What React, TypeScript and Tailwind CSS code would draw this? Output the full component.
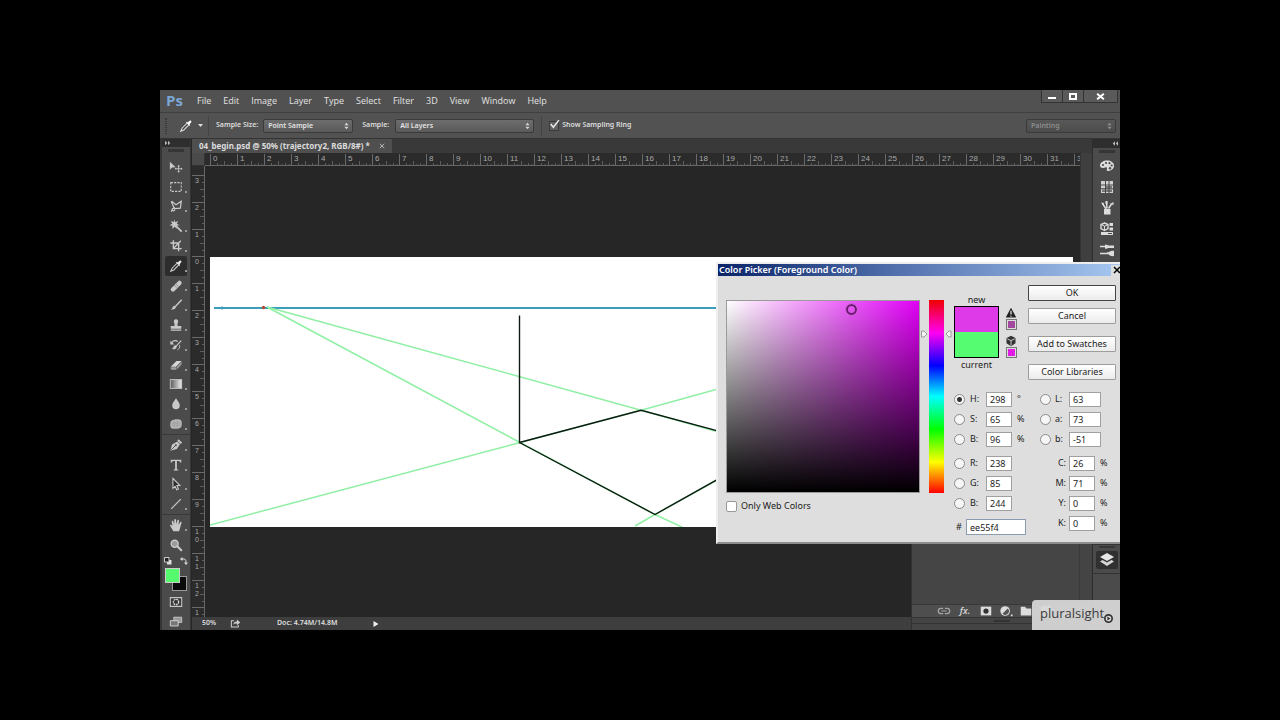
import type { ReactNode } from 'react'

const dot = '#c9c9c9'

type Tool = { name: string; icon: ReactNode; active?: boolean; noFlyout?: boolean }

const paintTools: Tool[] = [
    {
        name: 'Move',
        noFlyout: true,
        icon: (
            <>
                <path d="M1 2v9l2.500-2.300 4.200-.5z" fill={dot} />
                <path d="M11 6.500v7M7.500 10h7" stroke={dot} strokeWidth="1" />
                <path d="M11 5.500l1.500 1.800h-3zM11 14.500l1.500-1.800h-3zM6.500 10l1.800-1.500v3zM15.500 10l-1.800-1.500v3z" fill={dot} />
            </>
        ),
    },
    { name: 'Marquee', icon: <rect x="2" y="3" width="12" height="10" fill="none" stroke={dot} strokeDasharray="2.500 1.300" strokeWidth="1.200" /> },
    {
        name: 'Lasso',
        icon: <path d="M3 2.500l5 4L14 2.500l-1 8-6.500.5L5 8.500 2.500 2.500M6.500 11C4 10 3 11.500 4 13c1 1 2.500.5 2.500-1M3.500 12.500l-1 2" fill="none" stroke={dot} strokeWidth="1.400" />,
    },
    {
        name: 'Magic Wand',
        icon: (
            <>
                <path d="M6 .5l1.200 3.300 3.300-1.600L9 5.300 12 7.200l-3.400.5.5 3.500L6.500 8.800 3.800 11.500l.2-3.700L.5 7l3.200-1.700L2 2l3.300 1.800z" fill={dot} />
                <path d="M8 8l6.500 6.500" stroke={dot} strokeWidth="2" />
            </>
        ),
    },
    { name: 'Crop', icon: <path d="M5 1.500V11h9.500M1.500 4.500H11V14M5 11l8.500-9" fill="none" stroke={dot} strokeWidth="1.600" /> },
    {
        name: 'Eyedropper',
        active: true,
        icon: (
            <>
                <path d="M9 5L3.500 10.500 2 14l3.500-1.500L11 7" fill="#333" stroke={dot} strokeWidth="1.200" />
                <path d="M8 4l4 4 .8-1-.8-1 2-2.200c.8-1-.8-2.600-1.800-1.800L10 4 9 3z" fill="#ededed" />
            </>
        ),
    },
    {
        name: 'Healing Brush',
        icon: (
            <>
                <path d="M4.500 12L12 4.500" stroke={dot} strokeWidth="5" strokeLinecap="round" />
                <path d="M6 7l3 3M7.800 5.500l3 3" stroke="#777" strokeWidth=".8" />
            </>
        ),
    },
    {
        name: 'Brush',
        icon: (
            <>
                <path d="M14.500 2L7.500 9.500" stroke={dot} strokeWidth="1.700" />
                <path d="M8 9.500C6 8 4.500 9 4 11c-.5 1.500-1.500 1.800-2.500 1.800 3 1.200 6.500.2 6.500-3.300z" fill={dot} />
            </>
        ),
    },
    {
        name: 'Clone Stamp',
        icon: <path d="M6.300 6.500C4.500 4 6 1.500 8 1.500s3.500 2.500 1.700 5V9H14v3.300H2V9h4.300zM2 13.200h12v1.300H2z" fill={dot} />,
    },
    {
        name: 'History Brush',
        icon: (
            <>
                <path d="M14 3L8.500 9M3 5.500c2-3 5-3 7-1.500" stroke={dot} strokeWidth="1.400" fill="none" />
                <path d="M1.500 3v4.500H6z" fill={dot} />
                <path d="M9 9C7 7.500 5.500 9 5 10.500 4.500 12 3.500 12.300 2.500 12.300c3 1.400 6.500.2 6.500-3.300z" fill={dot} />
                <path d="M12 8c1 3-1 5-2.500 5.500" stroke={dot} fill="none" />
            </>
        ),
    },
    {
        name: 'Eraser',
        icon: (
            <>
                <path d="M2 10l6.500-6.500H14.500L8 10z" fill="#d6d6d6" />
                <path d="M2 10.600h6V13.500H3.500C2 13.500 1.500 12 2 10.600zM8.700 10.500L14.500 4.700c.5 1.500 0 2.600-1 3.500L8.700 13.300z" fill="#9f9f9f" />
            </>
        ),
    },
    {
        name: 'Gradient',
        icon: (
            <>
                <defs>
                    <linearGradient id="tool-gradient">
                        <stop offset="0" stopColor="#5a5a5a" />
                        <stop offset="1" stopColor="#f0f0f0" />
                    </linearGradient>
                </defs>
                <rect x="1.500" y="3" width="13" height="10" fill="url(#tool-gradient)" stroke={dot} />
            </>
        ),
    },
    { name: 'Blur', icon: <path d="M8 1.500c2 3.500 4.300 5.200 4.300 8.200A4.300 4.300 0 0 1 8 14a4.300 4.300 0 0 1-4.300-4.300C3.700 6.700 6 5 8 1.500z" fill={dot} /> },
    {
        name: 'Sponge',
        icon: (
            <>
                <path d="M2.500 4.500c2-2 9-2.500 11-1 1.500 1.500 1.500 7 0 8.500-2 2-9 2-11 .5C1 11 1 6 2.500 4.500z" fill="#b5b5b5" />
                <path d="M3 7h10M3 9.500h10M6 4.500V12M9.500 4v8" stroke="#969696" strokeWidth=".7" />
            </>
        ),
    },
]

const vectorTools: Tool[] = [
    {
        name: 'Pen',
        icon: (
            <>
                <path d="M1.500 14.500L3.500 7.500l6-3.500 3 3L9 12.500z" fill={dot} />
                <path d="M9.500 3L11 1.500 15 5.300 13.300 6.900z" fill={dot} />
                <path d="M2 14l5-5" stroke="#4b4b4b" />
                <circle cx="7.800" cy="8.300" r="1.200" fill="#4b4b4b" />
            </>
        ),
    },
    {
        name: 'Type',
        icon: <path d="M2 2h12V5.500h-.8C13 4 12.300 3.400 9 3.400v9c0 .8.500 1 1.700 1v.8H5.300V13.400c1.200 0 1.700-.2 1.700-1v-9C3.700 3.400 3 4 2.800 5.500H2z" fill={dot} />,
    },
    { name: 'Path Selection', icon: <path d="M4.500 1.500v11.500l2.500-2.400 1.800 4 2-.9-1.800-3.900h3.500z" fill="#2e2e2e" stroke={dot} strokeWidth="1.200" /> },
    { name: 'Line', icon: <path d="M2.500 13.500l11-11" stroke={dot} strokeWidth="1.400" /> },
]

const viewTools: Tool[] = [
    {
        name: 'Hand',
        icon: <path d="M5 15L1 8.500c.5-1.200 1.800-.7 3 1L3 3.700c.9-1.200 1.900-.4 2.100.8l.8 3L6 2c.6-1.200 1.900-.9 2 .2l.4 5 1.200-4.700c.7-1 1.900-.6 1.800.6L11 8l1.800-3.500c1-.7 1.800 0 1.500 1L12.500 12 11.500 15z" fill={dot} />,
    },
    {
        name: 'Zoom',
        noFlyout: true,
        icon: (
            <>
                <circle cx="6.500" cy="6.500" r="4" fill="#9b9b9b" stroke={dot} strokeWidth="1.600" />
                <path d="M9.500 9.500l4.500 4.500" stroke={dot} strokeWidth="2.400" strokeLinecap="round" />
            </>
        ),
    },
]

const dockPanels = [
    {
        name: 'Color',
        icon: (
            <>
                <path d="M8 2.500c4 0 7 2 7 5.200 0 3.500-3.500 5-6 5.300-1.500 0-1.500-1.500-1-2.300.3-.9-.5-1.700-1.500-1.200C4 10.500 1 10 1 7.500c0-3 3.500-5 7-5z" fill="#dcdcdc" />
                <g fill="#4a4a4a">
                    <circle cx="4" cy="7" r="1.100" />
                    <circle cx="7" cy="5" r="1.100" />
                    <circle cx="10.500" cy="5.200" r="1.100" />
                    <circle cx="12.700" cy="7.500" r="1.100" />
                    <circle cx="11" cy="10.300" r="1.200" />
                </g>
            </>
        ),
    },
    {
        name: 'Swatches',
        icon: (
            <>
                <path d="M2 2h12v12H2z" fill="#d0d0d0" />
                <path d="M7 7h6v2H7zM7 10.500h6V13H7zM3 10.500h3V13H3z" fill="#777" />
                <path d="M6.500 2v12M10 2v12M2 6h12M2 9.700h12" stroke="#3c3c3c" strokeWidth=".9" />
            </>
        ),
    },
    {
        name: 'Brushes',
        icon: (
            <>
                <path d="M5 9h6.500v5.500H5z" fill="#dcdcdc" />
                <path d="M7 9L3.500 3.500M8 8.500L7.500 1.500M9.500 8.500l3-4.500" stroke="#dcdcdc" strokeWidth="1.500" />
                <path d="M2 2.500l3 .5-.5 3zM6.500 1h2v3h-2zM11 4l3.500-2v3z" fill="#dcdcdc" />
            </>
        ),
    },
    {
        name: 'Clone Source',
        icon: (
            <>
                <path d="M5.500 2L9 3.500v4L5.500 9.500 2 7.500v-4z" fill="none" stroke="#dcdcdc" strokeWidth="1.400" />
                <path d="M2 3.500l3.500 1.700L9 3.500M5.500 5v4" stroke="#dcdcdc" fill="none" />
                <path d="M10.500 2H14v3h-3.500zM10.500 6.500H14v3h-3.500zM2 11h12v3H2z" fill="#dcdcdc" />
                <path d="M9 12h4v1H9z" fill="#4a4a4a" />
            </>
        ),
    },
    {
        name: 'Brush Presets',
        icon: (
            <>
                <path d="M1 4.500h6M8 11h7M1 11.500h8" stroke="#dcdcdc" strokeWidth="1.400" />
                <path d="M6 2.500c2 0 2.500 1 4 1h5V6h-5c-1.500 0-2 .8-4 .8zM15 9v5c-3 .5-5-.5-6-2.500 1-2 3-3 6-2.500z" fill="#dcdcdc" />
            </>
        ),
    },
]

const Glyph = ({ children, className = 'size-4' }: { children: ReactNode; className?: string }) => (
    <svg viewBox="0 0 16 16" className={className} aria-hidden="true">
        {children}
    </svg>
)

const ToolGroup = ({ tools, className }: { tools: Tool[]; className: string }) => (
    <div className={`flex flex-col px-[3px] ${className}`}>
        {tools.map((tool) => (
            <button
                key={tool.name}
                aria-label={tool.name}
                className={`relative flex min-h-0 flex-1 items-center justify-center rounded-[2px] ${tool.active ? 'bg-[#2d2d2d]' : ''}`}
            >
                <Glyph className="size-[14px]">{tool.icon}</Glyph>
                {!tool.noFlyout && <span className="absolute right-0 bottom-1 size-[2px] bg-[#9a9a9a]" />}
            </button>
        ))}
    </div>
)

const UpDown = ({ className }: { className: string }) => (
    <svg viewBox="0 0 6 8" className={`pointer-events-none absolute right-[3px] h-2 w-[5px] ${className}`} aria-hidden="true">
        <path d="M3 0l2.500 3h-5zM3 8L.5 5h5z" fill="currentColor" />
    </svg>
)

type OptionSelectProps = { id: string; value: string; className: string; dim?: boolean }

const OptionSelect = ({ id, value, className, dim }: OptionSelectProps) => (
    <span
        className={`relative flex h-[14px] items-center rounded-[2px] border border-[#3a3a3a] bg-linear-to-b ${
            dim ? 'from-[#585858] to-[#4c4c4c] text-[#8d8d8d]' : 'from-[#6d6d6d] to-[#5a5a5a] text-[#e2e2e2]'
        } ${className}`}
    >
        <select id={id} aria-label={value} className="h-full w-full appearance-none bg-transparent pl-1 leading-3 outline-none">
            <option>{value}</option>
        </select>
        <UpDown className={dim ? 'text-[#8d8d8d]' : 'text-[#d5d5d5]'} />
    </span>
)

const MenuBar = () => (
    <header className="flex h-[22px] shrink-0 items-center bg-[#515151] font-['Open_Sans',sans-serif] text-[9px] text-[#e2e2e2]">
        <span className="w-[37px] pb-[3px] pl-[6px] text-[15px] leading-5 font-bold text-[#7ba7d6]">Ps</span>
        <nav className="flex gap-3">
            {['File', 'Edit', 'Image', 'Layer', 'Type', 'Select', 'Filter', '3D', 'View', 'Window', 'Help'].map((item) => (
                <button key={item}>{item}</button>
            ))}
        </nav>
        <div className="mr-[2px] ml-auto flex h-[13px] gap-px self-start border border-t-0 border-[#333] bg-[#333]">
            <button aria-label="Minimize" className="flex w-5 items-center justify-center bg-[#5a5a5a]">
                <span className="mt-1 h-[2px] w-2 bg-white" />
            </button>
            <button aria-label="Maximize" className="flex w-5 items-center justify-center bg-[#5a5a5a]">
                <span className="h-[7px] w-2 border-2 border-white" />
            </button>
            <button aria-label="Close" className="flex w-[33px] items-center justify-center bg-[#5a5a5a]">
                <Glyph className="size-[9px]">
                    <path d="M2 3l12 10M14 3L2 13" stroke="#fff" strokeWidth="3.500" />
                </Glyph>
            </button>
        </div>
    </header>
)

const OptionsBar = () => (
    <div className="flex h-[27px] shrink-0 items-center border-y border-t-[#3f3f3f] border-b-[#343434] bg-[#525252] text-[7px] font-semibold text-[#dedede]">
        <span className="ml-[5px] h-4 w-[2px] border-x border-dotted border-[#3a3a3a]" />
        <button aria-label="Current tool" className="ml-3 flex items-center gap-[5px]">
            <Glyph className="size-[14px]">
                <path d="M9 5L3.500 10.500 2 14l3.500-1.500L11 7" fill="#444" stroke="#ddd" strokeWidth="1.200" />
                <path d="M8 4l4 4 .8-1-.8-1 2-2.200c.8-1-.8-2.600-1.800-1.800L10 4 9 3z" fill="#fff" />
            </Glyph>
            <svg viewBox="0 0 5 3" className="h-[3px] w-[5px]" aria-hidden="true">
                <path d="M0 0h5L2.500 3z" fill="#ddd" />
            </svg>
        </button>
        <span className="mr-[7px] ml-[5px] h-5 w-px bg-[#444]" />
        <label htmlFor="sample-size">Sample Size:</label>
        <OptionSelect id="sample-size" value="Point Sample" className="ml-[5px] w-[90px]" />
        <label htmlFor="sample-layers" className="ml-[9px]">
            Sample:
        </label>
        <OptionSelect id="sample-layers" value="All Layers" className="ml-[6px] w-[139px]" />
        <span className="mr-[7px] ml-[7px] h-5 w-px bg-[#444]" />
        <label className="relative flex items-center gap-[3px]">
            <input type="checkbox" defaultChecked className="peer size-[10px] appearance-none border border-[#3a3a3a] bg-[#616161]" />
            <svg viewBox="0 0 10 10" className="absolute -top-px left-0 hidden size-[11px] peer-checked:block" aria-hidden="true">
                <path d="M1.500 4.500l2.500 3L9 1" stroke="#e8e8e8" strokeWidth="1.400" fill="none" />
            </svg>
            Show Sampling Ring
        </label>
        <OptionSelect id="workspace" value="Painting" className="mr-1 ml-auto w-[90px]" dim />
    </div>
)

const Toolbox = () => (
    <aside className="flex w-[31px] shrink-0 flex-col border-r border-l-2 border-[#353535] bg-[#4b4b4b]">
        <div className="h-[9px] bg-[#2e2e2e] pl-[3px]">
            <svg viewBox="0 0 8 6" className="h-2 w-[6px]" aria-hidden="true">
                <path d="M0 0l3 3-3 3zM4 0l3 3-3 3z" fill="#bbb" />
            </svg>
        </div>
        <div className="flex h-3 items-start justify-center pt-[2px]">
            <span className="h-[3px] w-4 bg-[#363636]" />
        </div>
        <ToolGroup tools={paintTools} className="h-[277px] shrink-0" />
        <ToolGroup tools={vectorTools} className="h-20 shrink-0 border-t border-[#3a3a3a]" />
        <ToolGroup tools={viewTools} className="h-[41px] shrink-0 border-t border-[#3a3a3a]" />
        <div className="flex h-3 shrink-0 items-center justify-between px-[2px]">
            <button aria-label="Default colors" className="size-2">
                <Glyph className="size-2">
                    <path d="M6 6h9v9H6z" fill="#ddd" />
                    <path d="M1 1h9v9H1z" fill="#222" stroke="#ccc" strokeWidth="2" />
                </Glyph>
            </button>
            <button aria-label="Switch colors" className="size-2">
                <Glyph className="size-2">
                    <path d="M4 4h4c3 0 4 2 4 7" fill="none" stroke="#ddd" strokeWidth="2" />
                    <path d="M0 4l5-4v8zM12 16l-4-5h8z" fill="#ddd" />
                </Glyph>
            </button>
        </div>
        <div className="grid h-6 shrink-0 grid-cols-[7px_8px_7px] grid-rows-[8px_7px_8px] px-[3px] pt-px">
            <button aria-label="Background color" className="col-span-2 col-start-2 row-span-2 row-start-2 border border-[#999] bg-[#0a0a0a]" />
            <button aria-label="Foreground color" className="col-span-2 col-start-1 row-span-2 row-start-1 border border-[#ccc] bg-[#55f96d]" />
        </div>
        <button aria-label="Quick mask" className="mt-[3px] flex h-4 shrink-0 items-center justify-center">
            <Glyph className="size-[14px]">
                <path d="M1.500 3h13v10h-13z" fill="#3a3a3a" stroke="#c4c4c4" strokeWidth="1.200" />
                <circle cx="8" cy="8" r="3" fill="#333" stroke="#ddd" strokeWidth="1.500" strokeDasharray="2 .8" />
            </Glyph>
        </button>
        <button aria-label="Screen mode" className="mt-1 flex h-4 shrink-0 items-center justify-center">
            <Glyph className="size-[14px]">
                <path d="M5.500 2.500h9v6h-9z" fill="#999" stroke="#ccc" />
                <path d="M1.500 6.500h9v6h-9z" fill="#777" stroke="#ddd" />
            </Glyph>
        </button>
    </aside>
)

const columns = Array.from({ length: 33 }, (_, i) => i)
const rows = [3, 2, 1, 0, 1, 2, 3, 4, 5, 6, 7, 8, 9, 10, 11, 12, 13]

const HorizontalRuler = () => (
    <div className="flex h-[13px] min-w-0 flex-1 overflow-hidden border-b border-[#666] bg-[#2b2b2b] pt-px pl-[5px] font-['Liberation_Sans',sans-serif] text-[8px] leading-[10px] text-[#a8a8a8]">
        {columns.map((n) => (
            <div key={n} className="relative w-[27px] shrink-0 border-l border-[#6a6a6a] pl-[2px]">
                {n}
                <svg viewBox="0 0 27 4" className="absolute bottom-0 left-0 h-1 w-[27px]" aria-hidden="true">
                    <path d="M6.500 2v2M13.500 0v4M20.500 2v2M10 3v1M17 3v1M24 3v1" stroke="#5d5d5d" />
                </svg>
            </div>
        ))}
    </div>
)

const VerticalRuler = () => (
    <div className="w-[13px] shrink-0 overflow-hidden border-r border-[#666] bg-[#2b2b2b] pt-[9px] font-['Liberation_Sans',sans-serif] text-[7px] leading-2 text-[#a8a8a8]">
        {rows.map((n, i) => (
            <div key={i} className="relative flex h-[27px] flex-col border-t border-[#6a6a6a] pt-px pl-[3px]">
                {String(n).split('').map((digit, k) => (
                    <span key={k}>{digit}</span>
                ))}
                <svg viewBox="0 0 4 27" className="absolute top-0 right-0 h-[27px] w-1" aria-hidden="true">
                    <path d="M2 6.500h2M0 13.500h4M2 20.500h2" stroke="#5d5d5d" />
                </svg>
            </div>
        ))}
    </div>
)

const Artwork = () => (
    <svg viewBox="0 0 863 270" preserveAspectRatio="xMinYMin slice" className="h-[270px] w-full bg-white" aria-hidden="true">
        <path d="M4 51h859" stroke="#3a9dba" strokeWidth="1.800" />
        <path d="M4 51l9-1.500v3z" fill="#3a9dba" />
        <g fill="none" stroke="#8ff0a4" strokeWidth="1.500">
            <path d="M57 50l375 103.500L863 274" />
            <path d="M57 50l253 135.500 135 72 30 14" />
            <path d="M0 268l310-82.500L432 153l130-36" />
            <path d="M425 269l20-11.500 90-50" />
        </g>
        <path d="M309.500 58.500v127L431 153.300 560 188M309.500 185.500l135.500 72L560 193" fill="none" stroke="#0d1a12" strokeWidth="1.400" />
        <circle cx="53.500" cy="50.500" r="1.700" fill="#b4472f" />
    </svg>
)

const LayersPanel = () => (
    <section aria-label="Layers" className="absolute right-0 bottom-0 flex h-[100px] w-[181px] flex-col border-l border-[#323232] bg-[#444] pb-[6px]">
        <div className="mr-3 flex-1 border-r border-[#3a3a3a] bg-[#454545]" />
        <div className="flex h-[14px] items-center gap-[6px] border-y border-t-[#383838] border-b-[#333] bg-[#4e4e4e] pl-[25px] text-[#d0d0d0]">
            <Glyph className="size-[14px]">
                <path d="M7 5H4.500a3 3 0 0 0 0 6H7M9 5h2.500a3 3 0 0 1 0 6H9M5 8h6" fill="none" stroke="#a5a5a5" strokeWidth="1.400" />
            </Glyph>
            <button className="w-4 text-[9px] leading-3 font-semibold italic">fx.</button>
            <Glyph className="size-[14px]">
                <path d="M2 3h12v10H2z" fill="#dcdcdc" />
                <circle cx="8" cy="8" r="3" fill="#333" />
            </Glyph>
            <Glyph className="size-[14px]">
                <circle cx="7" cy="8" r="5.500" fill="#dcdcdc" />
                <path d="M10 5a4.200 4.200 0 0 1-6 6z" fill="#555" />
                <path d="M13.500 12h2v2h-2z" fill="#dcdcdc" />
            </Glyph>
            <Glyph className="size-[14px]">
                <path d="M2 3h5l1.500 2H14v8H2z" fill="#dcdcdc" />
            </Glyph>
            <Glyph className="size-[14px]">
                <path d="M2 2h12v12H6l-4-4z" fill="#fff" />
            </Glyph>
        </div>
        <div className="flex h-[6px] items-center justify-center border-b border-[#333]">
            <span className="h-[2px] w-4 bg-[#333]" />
        </div>
    </section>
)

const Workspace = () => (
    <main className="relative flex min-w-0 flex-1 flex-col bg-[#262626] pl-px">
        <div className="flex h-[14px] shrink-0 bg-[#393939]">
            <div className="flex items-center gap-[9px] bg-[#4f4f4f] px-[7px] text-[8px] leading-[14px] font-bold text-[#dcdcdc]">
                04_begin.psd @ 50% (trajectory2, RGB/8#) *
                <button aria-label="Close document">
                    <Glyph className="size-[6px]">
                        <path d="M2 2l12 12M14 2L2 14" stroke="#bbb" strokeWidth="2.500" />
                    </Glyph>
                </button>
            </div>
        </div>
        <div className="flex min-h-0 flex-1">
            <div className="flex min-w-0 flex-1 flex-col">
                <div className="flex shrink-0">
                    <span className="h-[13px] w-[13px] border-r border-b border-[#333] bg-[#4a4a4a]" />
                    <HorizontalRuler />
                </div>
                <div className="flex min-h-0 flex-1">
                    <VerticalRuler />
                    <div className="min-w-0 flex-1 overflow-hidden pt-[91px] pr-[7px] pl-[5px]">
                        <Artwork />
                    </div>
                </div>
            </div>
            <div className="w-3 shrink-0 border-l border-[#333] bg-[#3f3f3f]" />
        </div>
        <footer className="flex h-[13px] shrink-0 items-center bg-[#3e3e3e] pl-[10px] text-[7px] font-semibold text-[#dedede]">
            <span className="w-7">50%</span>
            <Glyph className="size-[11px]">
                <path d="M6 4H2v9h10v-3" fill="none" stroke="#ccc" strokeWidth="1.500" />
                <path d="M5 10c0-4 2-5 5-5V2l5 4.500-5 4V8C8 8 6 8 5 10z" fill="#ccc" />
            </Glyph>
            <span className="ml-9 w-24">Doc: 4.74M/14.8M</span>
            <Glyph className="size-2">
                <path d="M1 2l10 6-10 6z" fill="#eee" />
            </Glyph>
        </footer>
        <LayersPanel />
    </main>
)

const PanelDock = () => (
    <aside className="flex w-[28px] shrink-0 flex-col border-l border-[#2c2c2c] bg-[#4b4b4b]">
        <div className="flex h-[9px] items-center justify-end bg-[#2e2e2e] pr-[2px]">
            <svg viewBox="0 0 8 6" className="h-[5px] w-[6px]" aria-hidden="true">
                <path d="M4 0L1 3l3 3zM8 0L5 3l3 3z" fill="#bbb" />
            </svg>
        </div>
        <div className="flex h-[10px] items-start justify-center pt-[2px]">
            <span className="h-[3px] w-4 bg-[#363636]" />
        </div>
        <div className="flex flex-col items-center gap-[5px] pl-px">
            {dockPanels.map((panel) => (
                <button key={panel.name} aria-label={panel.name} className="flex h-4 items-center">
                    <Glyph>{panel.icon}</Glyph>
                </button>
            ))}
        </div>
        <div className="mt-auto flex h-[86px] flex-col items-center border-t border-[#333]">
            <span className="mt-px h-[2px] w-4 bg-[#363636]" />
            <button aria-label="Layers" className="mt-[3px] flex h-[18px] w-[22px] items-center justify-center rounded-[2px] bg-[#303030]">
                <Glyph>
                    <path d="M8 1l7 4-7 4-7-4z" fill="#e8e8e8" />
                    <path d="M1 9.500l2.500-1.500L8 10.600 12.500 8 15 9.500 8 14z" fill="#d4d4d4" />
                </Glyph>
            </button>
            <span className="mt-1 h-px w-full bg-[#333]" />
        </div>
    </aside>
)

type FieldProps = { name: string; value: string; unit?: string; radio?: boolean; checked?: boolean; wide?: boolean; side?: 'left' | 'right' }

const Field = ({ name, value, unit, radio, checked, wide, side = 'left' }: FieldProps) => {
    const id = `${side}-${name}-${value}`
    return (
        <div className="flex h-4 items-center">
            <span className="w-[11px]">
                {radio && (
                    <input
                        type="radio"
                        name="component"
                        aria-label={name}
                        defaultChecked={checked}
                        className="block size-[11px] appearance-none rounded-full border border-[#8b8b8b] bg-[#f6f6f6] checked:bg-[radial-gradient(circle,#333_2px,#f6f6f6_3px)]"
                    />
                )}
            </span>
            <label htmlFor={id} className={side === 'left' ? 'w-[21px] pl-[5px]' : radio ? 'w-[18px] pl-1' : 'w-[18px] pr-[3px] text-right'}>
                {name}:
            </label>
            <input id={id} defaultValue={value} className={`h-[15px] border border-[#a0a0a0] bg-white pl-[3px] outline-none ${wide ? 'w-8' : 'w-[26px]'}`} />
            {unit && <span className="ml-[5px]">{unit}</span>}
        </div>
    )
}

const DialogButton = ({ children, className = 'border-[#9c9c9c]' }: { children: ReactNode; className?: string }) => (
    <button className={`h-4 w-full rounded-[1px] border bg-linear-to-b from-white to-[#ececec] leading-[14px] ${className}`}>{children}</button>
)

const SwatchColumn = () => (
    <div className="flex w-[45px] flex-col items-center pt-[17px] leading-3">
        <span>new</span>
        <div className="flex h-[52px] w-full flex-col border border-black">
            <div className="flex-1 bg-[#de3ae8]" />
            <div className="flex-1 bg-[#55fb70]" />
        </div>
        <span className="mt-px">current</span>
    </div>
)

const ColorPicker = () => (
    <section
        role="dialog"
        aria-labelledby="picker-title"
        className="absolute top-[172px] right-[-4px] w-[408px] border-2 border-t-[#eee] border-r-[#888] border-b-[#8c8c8c] border-l-[#eee] bg-[#dedede] text-[9px] text-[#1c1c1c]"
    >
        <div className="flex h-[12px] items-center justify-between bg-linear-to-r from-[#0b2468] via-[#5b7ab5] to-[#a6c8f0]">
            <h2 id="picker-title" className="pl-px text-[9px] leading-3 font-semibold text-white">
                Color Picker (Foreground Color)
            </h2>
            <button aria-label="Close dialog" className="flex size-[11px] items-center justify-center bg-[#dedede]">
                <Glyph className="size-2">
                    <path d="M2 2l12 12M14 2L2 14" stroke="#000" strokeWidth="3" />
                </Glyph>
            </button>
        </div>
        <div className="flex h-[266px] pt-px pl-2">
            <div className="flex w-[194px] shrink-0 flex-col pt-[23px]">
                <div className="relative h-[193px] border border-[#9a9a9a] bg-[linear-gradient(to_top,#000,transparent),linear-gradient(to_right,#fff,#e000f6)]">
                    <span className="absolute top-[3px] left-[119px] size-[11px] rounded-full border-2 border-[#6b1a70] outline-1 outline-[#c95fd0]" />
                </div>
                <label className="mt-[5px] flex items-center gap-1 leading-4">
                    <input type="checkbox" className="size-[11px] appearance-none rounded-[2px] border border-[#999] bg-white" />
                    Only Web Colors
                </label>
            </div>
            <div className="flex w-[34px] shrink-0 pt-[23px]">
                <svg viewBox="0 0 9 12" className="mt-7 h-3 w-[9px]" aria-hidden="true">
                    <path d="M1.500 3h2.500l3 3-3 3H1.500z" fill="#f4f4f4" stroke="#999" />
                </svg>
                <div className="h-[193px] w-[15px] bg-[linear-gradient(to_bottom,#f00000,#ff00f0_17%,#0000ff_34%,#00ffff_50%,#00ff00_67%,#ffff00_84%,#ff0000)]" />
                <svg viewBox="0 0 9 12" className="mt-7 h-3 w-[9px]" aria-hidden="true">
                    <path d="M7 3H5L2 6l3 3h2z" fill="#f4f4f4" stroke="#999" />
                </svg>
            </div>
            <div className="flex w-[162px] shrink-0 flex-col">
                <div className="flex h-[114px]">
                    <SwatchColumn />
                    <div className="ml-[6px] flex w-3 flex-col items-center pt-[30px]">
                        <Glyph className="size-3">
                            <path d="M8 1l7 13H1z" fill="#222" />
                            <path d="M8 5v5M8 11.500v1.500" stroke="#eee" strokeWidth="1.600" />
                        </Glyph>
                        <button aria-label="Nearest print color" className="size-[11px] border border-[#777] bg-[#a3489f] outline-1 -outline-offset-2 outline-[#ddd]" />
                        <Glyph className="mt-[5px] size-3">
                            <path d="M8 1l6 3v7l-6 4-6-4V4z" fill="#333" />
                            <path d="M3 5l5 2.500L13 5M8 8v6" stroke="#ddd" strokeWidth="1.200" fill="none" />
                        </Glyph>
                        <button aria-label="Nearest web color" className="size-[11px] border border-[#777] bg-[#e01be4] outline-1 -outline-offset-2 outline-[#ddd]" />
                    </div>
                    <div className="ml-[11px] flex flex-1 flex-col pt-2">
                        <DialogButton className="border-[#444]">OK</DialogButton>
                        <div className="mt-[7px] flex flex-col gap-3">
                            <DialogButton>Cancel</DialogButton>
                            <DialogButton>Add to Swatches</DialogButton>
                            <DialogButton>Color Libraries</DialogButton>
                        </div>
                    </div>
                </div>
                <div className="flex">
                    <div className="flex w-[86px] flex-col gap-2">
                        <div className="flex flex-col gap-1">
                            <Field name="H" value="298" unit="°" radio checked />
                            <Field name="S" value="65" unit="%" radio />
                            <Field name="B" value="96" unit="%" radio />
                        </div>
                        <div className="flex flex-col gap-1">
                            <Field name="R" value="238" radio />
                            <Field name="G" value="85" radio />
                            <Field name="B" value="244" radio />
                        </div>
                        <div className="flex h-4 items-center">
                            <label htmlFor="hex" className="w-3 pl-[2px]">
                                #
                            </label>
                            <input id="hex" defaultValue="ee55f4" className="h-4 w-[60px] border border-[#8a9cb0] bg-white pl-[3px] outline-none" />
                        </div>
                    </div>
                    <div className="flex flex-col gap-2">
                        <div className="flex flex-col gap-1">
                            <Field side="right" name="L" value="63" radio wide />
                            <Field side="right" name="a" value="73" radio wide />
                            <Field side="right" name="b" value="-51" radio wide />
                        </div>
                        <div className="flex flex-col gap-1">
                            <Field side="right" name="C" value="26" unit="%" />
                            <Field side="right" name="M" value="71" unit="%" />
                            <Field side="right" name="Y" value="0" unit="%" />
                            <Field side="right" name="K" value="0" unit="%" />
                        </div>
                    </div>
                </div>
            </div>
        </div>
    </section>
)

const App = () => (
    <div className="flex min-h-screen items-center justify-center bg-black font-['Noto_Sans','Open_Sans',sans-serif]">
        <div className="relative flex aspect-video w-3/4 flex-col overflow-hidden bg-[#4b4b4b]">
            <MenuBar />
            <OptionsBar />
            <div className="flex min-h-0 flex-1">
                <Toolbox />
                <Workspace />
                <PanelDock />
            </div>
            <ColorPicker />
            <a
                href="#pluralsight"
                className="absolute right-0 bottom-0 flex h-[30px] w-[88px] items-center rounded-tl-[4px] bg-[#d6d6d6]/95 pb-[2px] pl-2 font-['Open_Sans',sans-serif] text-[13px] text-[#3c3c3c]"
            >
                pluralsight
                <Glyph className="mt-2 size-[9px] shrink-0">
                    <circle cx="8" cy="8" r="6.500" fill="#ddd" stroke="#333" strokeWidth="3" />
                    <path d="M6 4.500l5.500 3.500L6 11.500z" fill="#333" />
                </Glyph>
            </a>
        </div>
    </div>
)

export default App
